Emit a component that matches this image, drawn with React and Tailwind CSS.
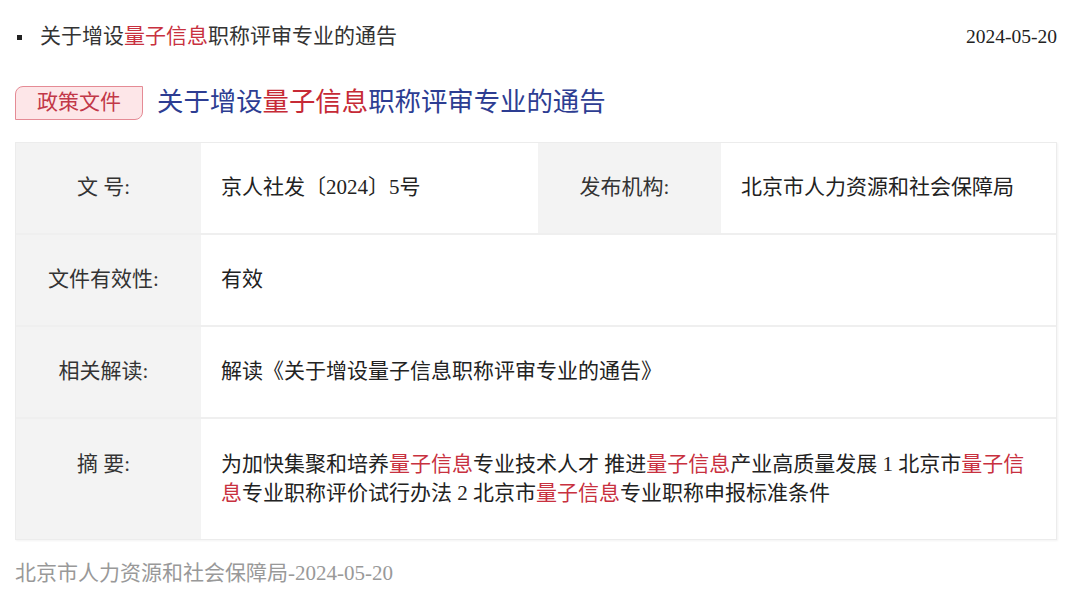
const FONT = { fontFamily: '"Liberation Serif", "Noto Sans CJK SC", serif' }

function Hl({ children }) {
  return <span className="text-[#c8313f]">{children}</span>
}

function Row({ label, children }) {
  return (
    <div className="flex h-[92px] border-b-2 border-[#efefef]">
      <div className="w-[185px] shrink-0 bg-[#f3f3f3] flex items-center justify-center pr-[10px] text-[21px] text-[#333]">
        {label}
      </div>
      <div className="flex-1 flex items-center pl-5 pr-[24px] text-[21px] text-[#222] bg-white">{children}</div>
    </div>
  )
}

export default function App() {
  return (
    <div className="w-[1080px] h-[600px] bg-white relative overflow-hidden" style={FONT}>
      {/* 列表项 */}
      <div className="flex items-center justify-between pl-[15px] pr-[23px] pt-[24px] h-[50px] text-[21px] text-[#333]">
        <div className="flex items-center">
          <span className="w-[5px] h-[5px] bg-[#222] ml-[2px] mr-[18px]" />
          <span>关于增设<Hl>量子信息</Hl>职称评审专业的通告</span>
        </div>
        <span className="text-[19.5px] text-[#222]">2024-05-20</span>
      </div>

      {/* 标题 */}
      <div className="flex items-center mt-[36px] pl-[15px] h-[34px]">
        <div className="w-[128px] h-[34px] flex items-center justify-center border border-[#e58b95] bg-[#fde6e8] rounded-tl-[8px] rounded-br-[8px] text-[21px] text-[#c23848]">
          政策文件
        </div>
        <div className="ml-[14px] text-[26.4px] text-[#2d3d92]">
          关于增设<span className="text-[#c62a36]">量子信息</span>职称评审专业的通告
        </div>
      </div>

      {/* 表格 */}
      <div className="mx-[15px] mt-[22px] w-[1042px] border border-[#ececec] shadow-[1px_1px_2px_rgba(0,0,0,0.05)]">
        <div className="flex h-[92px] border-b-2 border-[#efefef]">
          <div className="w-[185px] shrink-0 bg-[#f3f3f3] flex items-center justify-center pr-[10px] text-[21px] text-[#333]">
            文&nbsp;号:
          </div>
          <div className="w-[337px] flex items-center pl-5 text-[21px] text-[#222]">京人社发〔2024〕5号</div>
          <div className="w-[183px] shrink-0 bg-[#f3f3f3] flex items-center justify-center pr-[10px] text-[21px] text-[#333]">
            发布机构:
          </div>
          <div className="flex-1 flex items-center pl-5 text-[21px] text-[#222]">北京市人力资源和社会保障局</div>
        </div>
        <Row label="文件有效性:">有效</Row>
        <Row label="相关解读:">解读《关于增设量子信息职称评审专业的通告》</Row>
        <div className="flex h-[120px]">
          <div className="w-[185px] shrink-0 bg-[#f3f3f3] flex justify-center pt-[31px] pr-[10px] text-[21px] leading-[29px] text-[#333]">
            摘&nbsp;要:
          </div>
          <div className="flex-1 pl-5 pr-[24px] pt-[31px] text-[21px] text-[#222] bg-white">
            <p className="leading-[29px]">
              为加快集聚和培养<Hl>量子信息</Hl>专业技术人才 推进<Hl>量子信息</Hl>产业高质量发展 1 北京市<Hl>量子信息</Hl>专业职称评价试行办法 2 北京市<Hl>量子信息</Hl>专业职称申报标准条件
            </p>
          </div>
        </div>
      </div>

      {/* 来源 */}
      <div className="pl-[15px] mt-[18px] text-[21px] text-[#999]">北京市人力资源和社会保障局-2024-05-20</div>
    </div>
  )
}
